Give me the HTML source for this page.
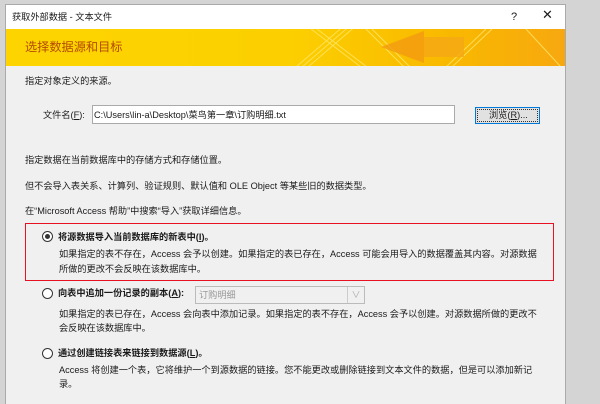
<!DOCTYPE html>
<html><head><meta charset="utf-8"><style>
*{margin:0;padding:0;box-sizing:border-box}
body{width:600px;height:400px;background:#d4d4d4;position:relative;overflow:hidden;font-family:"Liberation Sans","Noto Sans CJK SC",sans-serif;font-size:9.2px;color:#1a1a1a}
.win{position:absolute;left:5px;top:4px;width:561px;height:400px;background:#f0f0f0;border:1px solid #aaa;border-bottom:none}
.t{position:absolute;white-space:nowrap;line-height:12px}
.title{position:absolute;left:0;top:0;width:100%;height:24px;background:#fff}
.banner{position:absolute;left:0;top:24px;width:100%;height:37px;background:linear-gradient(90deg,#fdd400 0%,#fcd000 50%,#f9b800 80%,#f7a810 100%);overflow:hidden}
.radio{position:absolute;width:11px;height:11px;border:1px solid #333;border-radius:50%;background:#fff}
.dot{position:absolute;left:2px;top:2px;width:5px;height:5px;border-radius:50%;background:#333}
b{font-weight:bold}
</style></head><body>
<div class="win">
 <div class="title">
  <div class="t" style="left:6px;top:6px">获取外部数据 - 文本文件</div>
  <div class="t" style="left:505px;top:6px;font-size:11px">?</div>
  <div class="t" style="left:536px;top:4px;font-size:13px">✕</div>
 </div>
 <div class="banner">
  <svg width="561" height="37" style="position:absolute;left:0;top:0">
   <g stroke="#ffe76a" stroke-width="1" fill="none" opacity=".8">
    <path d="M290 38 L340 -5 M296 38 L346 -5 M302 38 L352 -5"/>
    <path d="M355 38 L305 0 M361 38 L311 0 M398 38 L360 0 M404 38 L366 0"/>
    <path d="M440 38 L480 0 M446 38 L486 0 M520 0 L555 38"/>
   </g>
   <path d="M375 18 L418 2 L418 34 Z" fill="#f39a10" opacity=".8"/>
   <rect x="418" y="8" width="40" height="20" fill="#f5a815" opacity=".8"/>
  </svg>
  <div class="t" style="left:19px;top:10px;font-size:12.2px;line-height:16px;color:#b34a00">选择数据源和目标</div>
 </div>
 <div class="t" style="left:19px;top:70px">指定对象定义的来源。</div>
 <div class="t" style="left:37px;top:104px">文件名(<u>F</u>):</div>
 <div style="position:absolute;left:86px;top:100px;width:363px;height:19px;background:#fff;border:1px solid #aaa"></div>
 <div class="t" style="left:88px;top:104px">C:\Users\lin-a\Desktop\菜鸟第一章\订购明细.txt</div>
 <div style="position:absolute;left:469px;top:102px;width:65px;height:17px;background:#e1e1e1;border:1px solid #0078d7;outline:1px dotted #333;outline-offset:-3px"></div>
 <div class="t" style="left:483px;top:104px">浏览(<u>R</u>)...</div>
 <div class="t" style="left:19px;top:149px">指定数据在当前数据库中的存储方式和存储位置。</div>
 <div class="t" style="left:19px;top:175px">但不会导入表关系、计算列、验证规则、默认值和 OLE Object 等某些旧的数据类型。</div>
 <div class="t" style="left:19px;top:200px">在“Microsoft Access 帮助”中搜索“导入”获取详细信息。</div>
 <div style="position:absolute;left:19px;top:218px;width:529px;height:58px;border:1px solid #e81123"></div>
 <div class="radio" style="left:36px;top:226px"><div class="dot"></div></div>
 <div class="t" style="left:52px;top:226px"><b>将源数据导入当前数据库的新表中(<u>I</u>)。</b></div>
 <div class="t" style="left:53px;top:243px">如果指定的表不存在，Access 会予以创建。如果指定的表已存在，Access 可能会用导入的数据覆盖其内容。对源数据</div>
 <div class="t" style="left:53px;top:258px">所做的更改不会反映在该数据库中。</div>
 <div class="radio" style="left:36px;top:283px"></div>
 <div class="t" style="left:52px;top:282px"><b>向表中追加一份记录的副本(<u>A</u>):</b></div>
 <div style="position:absolute;left:189px;top:281px;width:170px;height:18px;background:#f0f0f0;border:1px solid #bbb"></div>
 <div style="position:absolute;left:341px;top:282px;width:17px;height:16px;border-left:1px solid #ccc;color:#aaa;font-size:9px;text-align:center;line-height:16px">∨</div>
 <div class="t" style="left:193px;top:284px;color:#999">订购明细</div>
 <div class="t" style="left:53px;top:303px">如果指定的表已存在，Access 会向表中添加记录。如果指定的表不存在，Access 会予以创建。对源数据所做的更改不</div>
 <div class="t" style="left:53px;top:317px">会反映在该数据库中。</div>
 <div class="radio" style="left:36px;top:343px"></div>
 <div class="t" style="left:52px;top:342px"><b>通过创建链接表来链接到数据源(<u>L</u>)。</b></div>
 <div class="t" style="left:53px;top:359px">Access 将创建一个表，它将维护一个到源数据的链接。您不能更改或删除链接到文本文件的数据，但是可以添加新记</div>
 <div class="t" style="left:53px;top:373px">录。</div>
</div>
</body></html>
